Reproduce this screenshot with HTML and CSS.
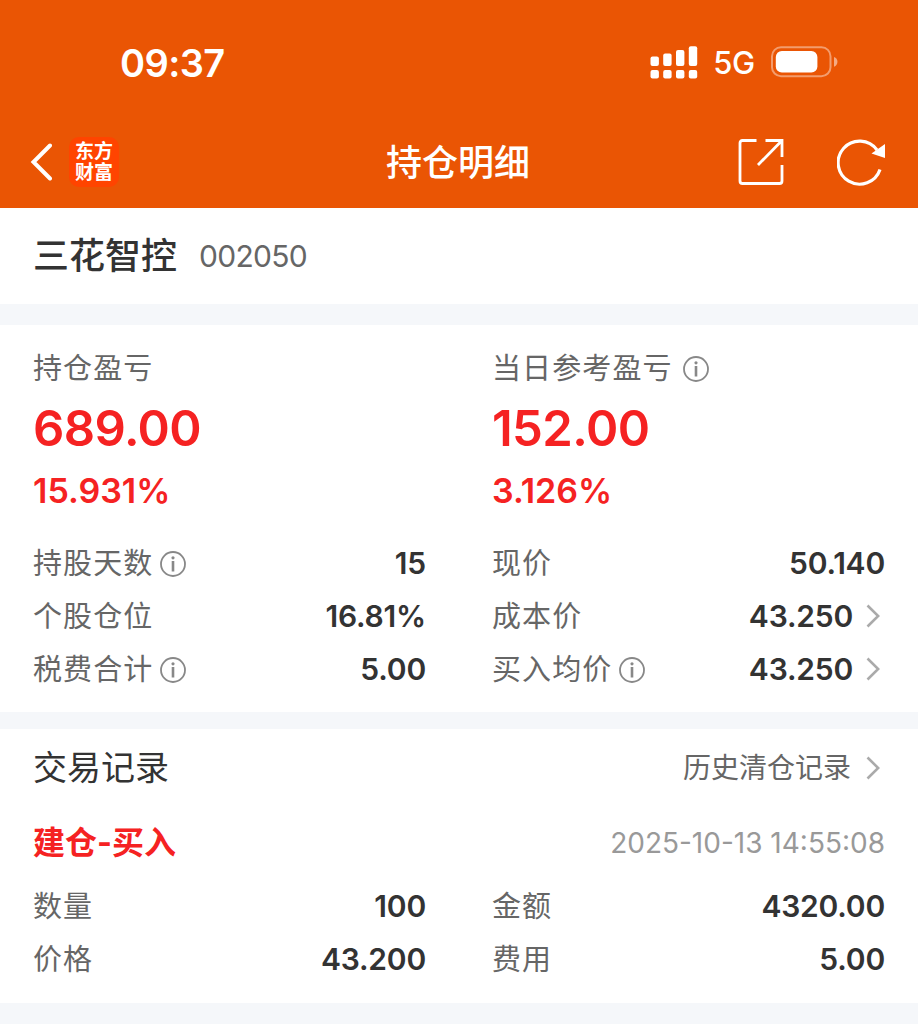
FILE: index.html
```
<!DOCTYPE html>
<html lang="zh-CN">

<head>
    <meta charset="UTF-8">
    <meta name="viewport" content="width=device-width, initial-scale=1.0">
    <title>持仓明细</title>
    <link rel="stylesheet" href="styles.css">
</head>

<body>
    <!-- shared icons -->
    <svg class="defs" width="0" height="0">
        <symbol id="info" viewBox="0 0 26 26">
            <circle cx="13" cy="13" r="12" fill="none" stroke="currentColor" stroke-width="1.8" />
            <circle cx="13" cy="6.8" r="1.6" fill="currentColor" />
            <path d="M13 10V20.500" fill="none" stroke="currentColor" stroke-width="2.6" />
        </symbol>
        <symbol id="arrow" viewBox="0 0 14 24">
            <path d="M1.5 1.5L12.2 12L1.5 22.5" fill="none" stroke="currentColor" stroke-width="2.6" />
        </symbol>
    </svg>

    <header>
        <div class="status">
            <span class="time">09:37</span>
            <div class="signals">
                <svg class="cell" width="48" height="33" viewBox="0 0 48 33" fill="#fff">
                    <rect x="0.5" y="10.5" width="8.4" height="9.5" rx="2" />
                    <rect x="13.2" y="7.5" width="8.4" height="12.5" rx="2" />
                    <rect x="26" y="4" width="8.4" height="16" rx="2" />
                    <rect x="38.8" y="0.3" width="8.4" height="19.7" rx="2" />
                    <rect x="0.5" y="24" width="8.4" height="8.4" rx="2" />
                    <rect x="13.2" y="24" width="8.4" height="8.4" rx="2" />
                    <rect x="26" y="24" width="8.4" height="8.4" rx="2" />
                    <rect x="38.8" y="24" width="8.4" height="8.4" rx="2" />
                </svg>
                <span class="network">5G</span>
                <svg class="battery" width="67" height="32" viewBox="0 0 67 32">
                    <rect x="1" y="1.2" width="58.5" height="29" rx="9" fill="none" stroke="#fff" stroke-opacity=".42" stroke-width="2" />
                    <rect x="4.8" y="5" width="41.6" height="21.4" rx="6" fill="#fff" />
                    <path d="M63 11C67.6 12.2 67.6 19.4 63 20.8Z" fill="#fff" fill-opacity=".5" />
                </svg>
            </div>
        </div>
        <nav>
            <div class="left">
                <svg width="22" height="38" viewBox="0 0 22 38">
                    <path d="M20 2.500L3.500 19L20 35.500" fill="none" stroke="#fff" stroke-width="4" stroke-linecap="round" />
                </svg>
                <div class="logo">东方<br>财富</div>
            </div>
            <h1>持仓明细</h1>
            <div class="right">
                <svg width="46" height="47" viewBox="0 0 46 47" fill="none" stroke="#fff" stroke-width="2.8">
                    <path d="M18.5 2.500H4.5Q2 2.500 2 5V43Q2 45.500 4.500 45.500H41.500Q44 45.500 44 43V27" />
                    <path d="M27.500 2.500H44V19M43.500 3L20 27" />
                </svg>
                <svg width="49" height="48" viewBox="0 0 49 48">
                    <path d="M40 12A21.500 21.500 0 1 0 43 31.500" fill="none" stroke="#fff" stroke-width="3.2" />
                    <path d="M48 6V20L34.500 15.500Z" fill="#fff" />
                </svg>
            </div>
        </nav>
    </header>

    <section class="stock">
        <h2>三花智控</h2>
        <span>002050</span>
    </section>

    <section class="position">
        <div class="columns">
            <div class="profit">
                <div class="label">持仓盈亏</div>
                <div class="amount">689.00</div>
                <div class="percent">15.931%</div>
            </div>
            <div class="profit">
                <div class="label">当日参考盈亏<svg class="info far"><use href="#info" /></svg></div>
                <div class="amount">152.00</div>
                <div class="percent">3.126%</div>
            </div>
        </div>
        <div class="columns">
            <div class="row">
                <div class="label">持股天数<svg class="info"><use href="#info" /></svg></div>
                <div class="value">15</div>
            </div>
            <div class="row">
                <div class="label">现价</div>
                <div class="value">50.140</div>
            </div>
            <div class="row">
                <div class="label">个股仓位</div>
                <div class="value">16.81%</div>
            </div>
            <div class="row">
                <div class="label">成本价</div>
                <div class="value">43.250<svg class="arrow"><use href="#arrow" /></svg></div>
            </div>
            <div class="row">
                <div class="label">税费合计<svg class="info"><use href="#info" /></svg></div>
                <div class="value">5.00</div>
            </div>
            <div class="row">
                <div class="label">买入均价<svg class="info"><use href="#info" /></svg></div>
                <div class="value">43.250<svg class="arrow"><use href="#arrow" /></svg></div>
            </div>
        </div>
    </section>

    <section class="records">
        <div class="title">
            <h3>交易记录</h3>
            <div class="history"><span>历史清仓记录</span><svg class="arrow"><use href="#arrow" /></svg></div>
        </div>
        <div class="trade">
            <span class="type">建仓-买入</span>
            <span class="date">2025-10-13 14:55:08</span>
        </div>
        <div class="columns">
            <div class="row">
                <div class="label">数量</div>
                <div class="value">100</div>
            </div>
            <div class="row">
                <div class="label">金额</div>
                <div class="value">4320.00</div>
            </div>
            <div class="row">
                <div class="label">价格</div>
                <div class="value">43.200</div>
            </div>
            <div class="row">
                <div class="label">费用</div>
                <div class="value">5.00</div>
            </div>
        </div>
    </section>
</body>

</html>
```
FILE: styles.css
```
* {
    padding: 0;
    margin: 0;
    box-sizing: border-box;
}

body {
    height: 1024px;
    overflow: hidden;
    background-color: #f5f7fa;
    color: #333;
    font-family: Inter, "Noto Sans CJK SC", sans-serif;
}

svg {
    display: block;
    flex: none;
}

.defs {
    display: none;
}

header {
    height: 208px;
    background-color: #ea5504;
    color: #fff;
}

.status {
    height: 115px;
    padding: 10px 80px 0 120px;
    display: flex;
    justify-content: space-between;
    align-items: center;
}

.time {
    font-size: 38px;
    font-weight: 600;
    letter-spacing: -0.6px;
}

.signals {
    display: flex;
    align-items: center;
}

.cell,
.battery {
    margin-top: -1px;
}

.network {
    margin: 0 16px 0 15px;
    font-size: 31px;
    font-weight: 500;
    letter-spacing: -0.3px;
}

nav {
    height: 93px;
    padding: 0 32px 0 30px;
    display: grid;
    grid-template-columns: 1fr auto 1fr;
    align-items: center;
}

nav .left,
nav .right {
    display: flex;
    align-items: center;
}

nav .right {
    justify-content: flex-end;
    gap: 53px;
}

h1 {
    padding-top: 2px;
    font-size: 36px;
    font-weight: 500;
    line-height: 40px;
}

.logo {
    width: 50px;
    height: 50px;
    margin-left: 17px;
    padding-top: 4px;
    border-radius: 10px;
    background-color: #ff4400;
    font-size: 19px;
    font-weight: 700;
    line-height: 21px;
    text-align: center;
}

section {
    padding: 0 33px;
    background-color: #fff;
}

.stock {
    height: 96px;
    display: flex;
    align-items: center;
}

.stock h2 {
    margin-right: 22px;
    font-size: 36px;
    font-weight: 500;
    line-height: 40px;
}

.stock span {
    color: #666;
    font-size: 30px;
    letter-spacing: -0.7px;
    line-height: 40px;
}

.position {
    height: 387px;
    margin-top: 21px;
    padding-top: 24px;
}

.columns {
    display: grid;
    grid-template-columns: 393px 393px;
    column-gap: 66px;
}

.label {
    display: flex;
    align-items: center;
    color: #666;
    font-size: 29px;
    letter-spacing: 1.1px;
    line-height: 40px;
}

.info {
    width: 26px;
    height: 26px;
    margin-left: 7px;
    color: #888;
}

.info.far {
    margin-left: 10px;
}

.profit {
    height: 187px;
    color: #f52222;
}

.amount {
    padding-top: 1px;
    font-size: 49px;
    font-weight: 600;
    letter-spacing: -0.6px;
    line-height: 78px;
}

.percent {
    margin-top: -1px;
    font-size: 34px;
    font-weight: 600;
    line-height: 48px;
}

.row {
    height: 53.4px;
    display: flex;
    justify-content: space-between;
    align-items: center;
}

.row .label {
    padding-top: 2px;
}

.value {
    display: flex;
    align-items: center;
    font-size: 30px;
    font-weight: 600;
    letter-spacing: -0.2px;
    line-height: 40px;
}

.arrow {
    width: 14px;
    height: 24px;
    margin: 0 5px 0 13px;
    color: #aaa;
}

.records {
    height: 274px;
    margin-top: 17px;
}

.title {
    height: 78px;
    display: flex;
    justify-content: space-between;
    align-items: center;
}

h3 {
    font-size: 34px;
    font-weight: 400;
    line-height: 40px;
}

.history {
    display: flex;
    align-items: center;
    color: #666;
    font-size: 28px;
    line-height: 40px;
}

.history .arrow {
    margin-left: 15px;
}

.trade {
    height: 72px;
    display: flex;
    justify-content: space-between;
    align-items: center;
    line-height: 40px;
}

.type {
    color: #f52222;
    font-size: 32px;
    font-weight: 700;
}

.date {
    color: #999;
    font-size: 28px;
}
```
